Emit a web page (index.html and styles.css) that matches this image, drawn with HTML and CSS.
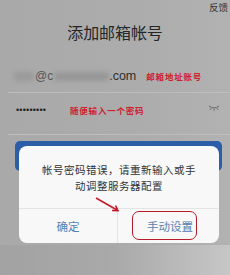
FILE: index.html
```html
<!DOCTYPE html>
<html>
<head>
<meta charset="utf-8">
<link rel="stylesheet" href="styles.css">
</head>
<body>
<div class="screen">
  <div class="topbar"><span class="feedback">反馈</span></div>
  <h1 class="title">添加邮箱帐号</h1>
  <div class="form">
    <div class="row row-email">
      <span class="blur b1"></span><span class="at">@c</span><span class="blur b2"></span><span class="dom">.com</span>
      <span class="note note-email">邮箱地址账号</span>
    </div>
    <div class="row row-pass">
      <span class="dots">•••••••••</span>
      <span class="note note-pass">随便输入一个密码</span>
      <svg class="eye" width="12" height="8" viewBox="0 0 12 8"><path d="M1 2 Q6 6 11 2" fill="none" stroke="#666" stroke-width="1"/><path d="M3 4 L2 6 M6 5 L6 7 M9 4 L10 6" stroke="#666" stroke-width="0.8"/></svg>
    </div>
  </div>
  <div class="stage">
    <div class="blue-btn"></div>
    <div class="modal">
      <div class="msg">
        <span class="msg-line">帐号密码错误，请重新输入或手</span>
        <span class="msg-line">动调整服务器配置</span>
      </div>
      <div class="actions">
        <div class="act">确定</div>
        <div class="act act-manual">手动设置</div>
      </div>
      <div class="ring"></div>
      <svg class="arrow" width="26" height="16" viewBox="0 0 26 16"><path d="M1 1 L22 13" stroke="#c3182a" stroke-width="1.6"/><path d="M17 13.5 L23 13.6 L20.5 8.5" fill="none" stroke="#c3182a" stroke-width="1.6"/></svg>
    </div>
  </div>
</div>
</body>
</html>
```

FILE: styles.css
```css
html, body { margin: 0; padding: 0; }
body {
  width: 230px;
  height: 275px;
  overflow: hidden;
  background: #ababab;
  font-family: "Noto Sans CJK SC", "Liberation Sans", sans-serif;
  color: #2b2b2b;
}
.screen {
  position: relative;
  height: 275px;
  background:
    linear-gradient(90deg, rgba(150,150,150,0.35) 0%, rgba(160,160,160,0.2) 50%, rgba(215,215,215,0.55) 100%) 0 245px / 100% 30px no-repeat,
    linear-gradient(90deg, #a9a9a9 0%, #acacac 60%, #b2b2b2 100%);
}
.topbar { height: 14px; display: flex; justify-content: flex-end; }
.feedback { font-size: 9.5px; line-height: 14px; color: #333; margin-right: 2px; }
.title {
  margin: 7px 0 0;
  font-size: 16px;
  font-weight: normal;
  line-height: 22px;
  text-align: center;
  color: #262626;
  letter-spacing: -0.1px;
}
.form { margin-top: 15px; }
.row {
  display: flex;
  align-items: center;
  margin-left: 8px;
  border-bottom: 1px solid #bdbdbd;
}
.row-email { height: 35px; padding-left: 6px; padding-top: 2px; box-sizing: border-box; }
.row-pass { height: 42px; padding-left: 8px; padding-bottom: 8px; box-sizing: border-box; }
.blur {
  display: inline-block;
  height: 9px;
  background: #9a9a9a;
  filter: blur(2px);
  border-radius: 3px;
}
.b1 { width: 20px; }
.b2 { width: 55px; margin-left: 1px; background: #979797; }
.at { font-family: "Liberation Sans", sans-serif; font-size: 12px; color: #555; margin-left: 1px; }
.dom { font-family: "Liberation Sans", sans-serif; font-size: 12.5px; color: #2e2e2e; }
.note {
  font-size: 8.5px;
  font-weight: bold;
  color: #cf2030;
  letter-spacing: 0.8px;
}
.note-email { margin-left: 10px; }
.dots { font-size: 9px; letter-spacing: 0.2px; color: #222; font-family: "Liberation Sans", sans-serif; width: 54px; }
.eye { margin-left: auto; margin-right: 10px; margin-top: -3px; }
.stage { position: relative; margin-top: 6px; height: 110px; }
.blue-btn {
  margin: 0 8px 0 15px;
  height: 30px;
  border-radius: 5px;
  background: #2c5ea8;
}
.modal {
  position: absolute;
  left: 19px;
  top: 5px;
  width: 200px;
  height: 97px;
  border-radius: 8px;
  background: #f8f8f8;
  display: flex;
  flex-direction: column;
}
.msg {
  height: 50px;
  margin-bottom: 12px;
  box-sizing: border-box;
  padding-top: 16px;
  display: flex;
  flex-direction: column;
  align-items: center;
  font-size: 10.5px;
  letter-spacing: 0.5px;
  line-height: 15.5px;
  color: #333;
}
.msg-line { display: block; }
.actions {
  flex: 1;
  display: flex;
  border-top: 1px solid #e4e4e4;
}
.act {
  flex: 1;
  display: flex;
  align-items: center;
  justify-content: center;
  font-size: 11.5px;
  color: #5681b0;
}
.act + .act { border-left: 1px solid #e4e4e4; }
.act-manual { padding-left: 3px; }
.ring {
  position: absolute;
  left: 113px;
  top: 65px;
  width: 63px;
  height: 27px;
  border: 1.5px solid #b51c2c;
  border-radius: 7px;
}
.arrow { position: absolute; left: 76px; top: 51px; }
```
